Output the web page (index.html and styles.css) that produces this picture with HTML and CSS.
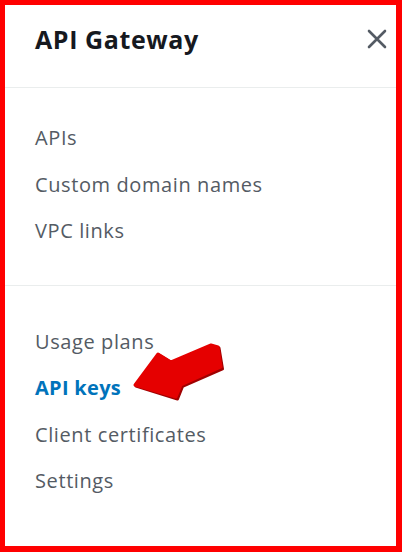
FILE: index.html
```html
<!DOCTYPE html>
<html lang="en">
<head>
<meta charset="utf-8">
<title>API Gateway</title>
<link rel="stylesheet" href="styles.css">
</head>
<body>
<div class="frame">
  <header class="header">
    <h1 class="title">API Gateway</h1>
    <button class="close" aria-label="Close">
      <svg width="20" height="20" viewBox="0 0 20 20"><path d="M2 2 L18 18 M18 2 L2 18" stroke="#545b64" stroke-width="2.6" stroke-linecap="round" fill="none"/></svg>
    </button>
  </header>
  <nav class="section first">
    <a class="item">APIs</a>
    <a class="item">Custom domain names</a>
    <a class="item">VPC links</a>
  </nav>
  <nav class="section second">
    <a class="item">Usage plans</a>
    <a class="item active">API keys</a>
    <a class="item">Client certificates</a>
    <a class="item">Settings</a>
  </nav>
</div>
<svg class="arrow" width="402" height="552" viewBox="0 0 402 552">
  <polygon points="136,386 159,355 172,363 212,346 219,348 222.5,369 182.5,386.5 177.5,399" fill="#a00000" stroke="#a00000" stroke-width="3" stroke-linejoin="round"/>
  <polygon points="135,385 158,354 171,362 211,345 218,347 221,367 181,385 176,397" fill="#e50000" stroke="#e50000" stroke-width="3" stroke-linejoin="round"/>
</svg>
</body>
</html>
```
FILE: styles.css
```css
html, body {
  margin: 0;
  padding: 0;
  background: #fff;
}
body {
  position: relative;
  width: 402px;
  height: 552px;
  overflow: hidden;
  font-family: "Open Sans", "Noto Sans", sans-serif;
}
.frame {
  box-sizing: border-box;
  width: 402px;
  height: 552px;
  border-style: solid;
  border-color: #ff0000;
  border-width: 5px 6px 6px 5px;
  background: #fff;
}
.header {
  height: 83px;
  box-sizing: border-box;
  border-bottom: 1px solid #eaeded;
  display: flex;
  align-items: flex-start;
  justify-content: space-between;
  padding: 0 9px 0 30px;
}
.title {
  margin: 0;
  padding-top: 17.5px;
  font-size: 25px;
  line-height: 32px;
  font-weight: 700;
  color: #16191f;
  letter-spacing: 0.6px;
}
.close {
  border: 0;
  background: none;
  padding: 0;
  margin-top: 24px;
  width: 20px;
  height: 20px;
  display: flex;
}
.section {
  display: flex;
  flex-direction: column;
  padding-left: 30px;
}
.section.first {
  padding-top: 27px;
  padding-bottom: 30px;
  border-bottom: 1px solid #eaeded;
}
.section.second {
  padding-top: 33px;
}
.item {
  font-size: 20px;
  line-height: 46.5px;
  height: 46.5px;
  color: #545b64;
  text-decoration: none;
  letter-spacing: 0.6px;
}
.item.active {
  color: #0073bb;
  font-weight: 700;
  letter-spacing: 0.3px;
}
.arrow {
  position: absolute;
  left: 0;
  top: 0;
  pointer-events: none;
}
```
